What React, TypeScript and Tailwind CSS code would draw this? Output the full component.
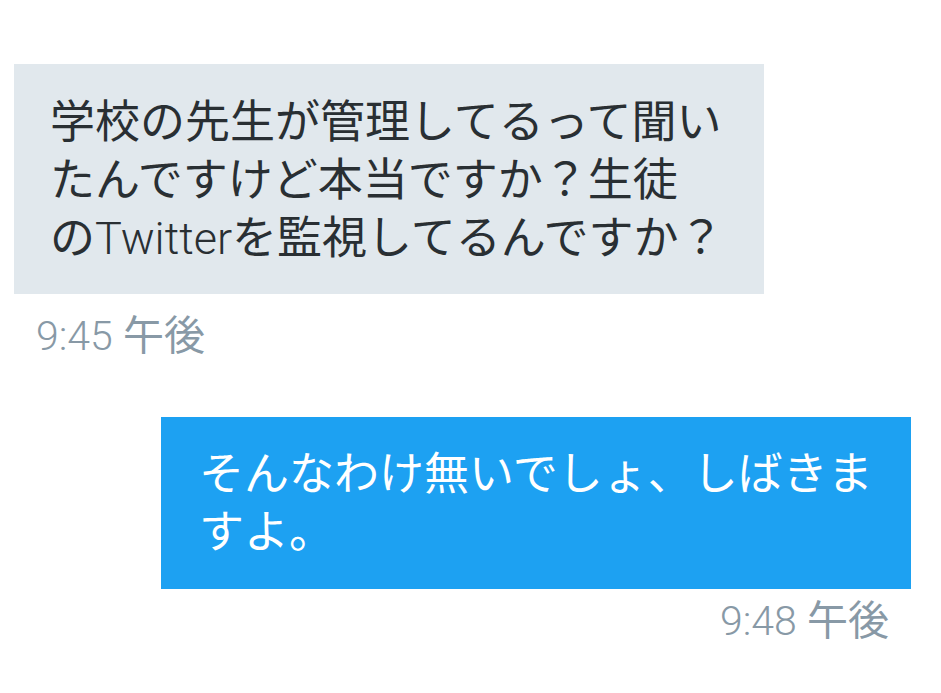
const font = { fontFamily: "Roboto, 'Noto Sans CJK JP', sans-serif" };

export default function App() {
  return (
    <div className="min-h-screen bg-white pt-[64px] pl-[14px] pr-[30px]" style={font}>
      <div className="flex flex-col items-start">
        <div className="w-[750px] bg-[#e1e8ed] px-[36px] pt-[30px] pb-[26px] text-[45px] leading-[58px] text-[#292f33]">
          学校の先生が管理してるって聞い
          <br />
          たんですけど本当ですか？生徒
          <br />
          の<span className="font-light">Twitter</span>を監視してるんですか？
        </div>
        <div className="mt-[19px] pl-[22px] text-[41px] leading-[46px] text-[#8899a6]">
          <span className="font-light">9:45</span> 午後
        </div>
      </div>

      <div className="mt-[58px] flex flex-col items-end">
        <div className="w-[750px] bg-[#1da1f2] px-[38px] pt-[29px] pb-[27px] text-[45px] leading-[58px] text-white">
          そんなわけ無いでしょ、しばきま
          <br />
          すよ。
        </div>
        <div className="mt-[9px] pr-[22px] text-[41px] leading-[46px] text-[#8899a6]">
          <span className="font-light">9:48</span> 午後
        </div>
      </div>
    </div>
  );
}
